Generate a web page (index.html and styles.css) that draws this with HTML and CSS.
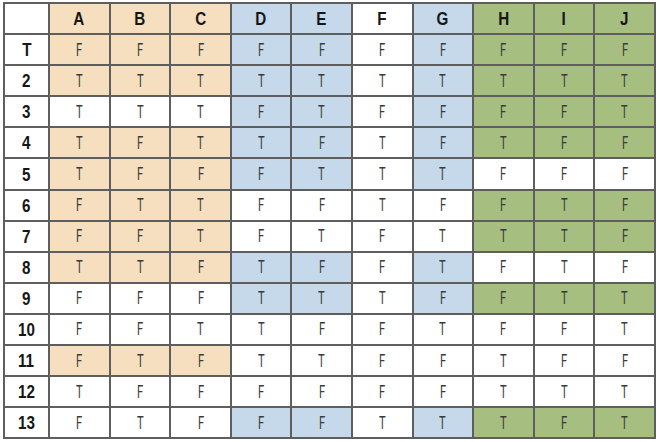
FILE: index.html
```html
<!DOCTYPE html>
<html>
<head>
<meta charset="utf-8">
<link rel="stylesheet" href="styles.css">
</head>
<body>
<table class="grid">
<colgroup><col class="c-head"><col><col><col><col><col><col><col><col><col><col></colgroup>
<tr>
<th class="corner"></th>
<th class="p"><span>A</span></th><th class="p"><span>B</span></th><th class="p"><span>C</span></th>
<th class="b"><span>D</span></th><th class="b"><span>E</span></th><th><span>F</span></th><th class="b"><span>G</span></th>
<th class="g"><span>H</span></th><th class="g"><span>I</span></th><th class="g"><span>J</span></th>
</tr>
<tr><th><span>T</span></th>
<td class="p"><span>F</span></td><td class="p"><span>F</span></td><td class="p"><span>F</span></td>
<td class="b"><span>F</span></td><td class="b"><span>F</span></td><td><span>F</span></td><td class="b"><span>F</span></td>
<td class="g"><span>F</span></td><td class="g"><span>F</span></td><td class="g"><span>F</span></td></tr>
<tr><th><span>2</span></th>
<td class="p"><span>T</span></td><td class="p"><span>T</span></td><td class="p"><span>T</span></td>
<td class="b"><span>T</span></td><td class="b"><span>T</span></td><td><span>T</span></td><td class="b"><span>T</span></td>
<td class="g"><span>T</span></td><td class="g"><span>T</span></td><td class="g"><span>T</span></td></tr>
<tr><th><span>3</span></th>
<td><span>T</span></td><td><span>T</span></td><td><span>T</span></td>
<td class="b"><span>F</span></td><td class="b"><span>T</span></td><td><span>F</span></td><td class="b"><span>F</span></td>
<td class="g"><span>F</span></td><td class="g"><span>F</span></td><td class="g"><span>T</span></td></tr>
<tr><th><span>4</span></th>
<td class="p"><span>T</span></td><td class="p"><span>F</span></td><td class="p"><span>T</span></td>
<td class="b"><span>T</span></td><td class="b"><span>F</span></td><td><span>T</span></td><td class="b"><span>F</span></td>
<td class="g"><span>T</span></td><td class="g"><span>F</span></td><td class="g"><span>F</span></td></tr>
<tr><th><span>5</span></th>
<td class="p"><span>T</span></td><td class="p"><span>F</span></td><td class="p"><span>F</span></td>
<td class="b"><span>F</span></td><td class="b"><span>T</span></td><td><span>T</span></td><td class="b"><span>T</span></td>
<td><span>F</span></td><td><span>F</span></td><td><span>F</span></td></tr>
<tr><th><span>6</span></th>
<td class="p"><span>F</span></td><td class="p"><span>T</span></td><td class="p"><span>T</span></td>
<td><span>F</span></td><td><span>F</span></td><td><span>T</span></td><td><span>F</span></td>
<td class="g"><span>F</span></td><td class="g"><span>T</span></td><td class="g"><span>F</span></td></tr>
<tr><th><span>7</span></th>
<td class="p"><span>F</span></td><td class="p"><span>F</span></td><td class="p"><span>T</span></td>
<td><span>F</span></td><td><span>T</span></td><td><span>F</span></td><td><span>T</span></td>
<td class="g"><span>T</span></td><td class="g"><span>T</span></td><td class="g"><span>F</span></td></tr>
<tr><th><span>8</span></th>
<td class="p"><span>T</span></td><td class="p"><span>T</span></td><td class="p"><span>F</span></td>
<td class="b"><span>T</span></td><td class="b"><span>F</span></td><td><span>F</span></td><td class="b"><span>T</span></td>
<td><span>F</span></td><td><span>T</span></td><td><span>F</span></td></tr>
<tr><th><span>9</span></th>
<td><span>F</span></td><td><span>F</span></td><td><span>F</span></td>
<td class="b"><span>T</span></td><td class="b"><span>T</span></td><td><span>T</span></td><td class="b"><span>F</span></td>
<td class="g"><span>F</span></td><td class="g"><span>T</span></td><td class="g"><span>T</span></td></tr>
<tr><th><span>10</span></th>
<td><span>F</span></td><td><span>F</span></td><td><span>T</span></td>
<td><span>T</span></td><td><span>F</span></td><td><span>F</span></td><td><span>T</span></td>
<td><span>F</span></td><td><span>F</span></td><td><span>T</span></td></tr>
<tr><th><span>11</span></th>
<td class="p"><span>F</span></td><td class="p"><span>T</span></td><td class="p"><span>F</span></td>
<td><span>T</span></td><td><span>T</span></td><td><span>F</span></td><td><span>F</span></td>
<td><span>T</span></td><td><span>F</span></td><td><span>F</span></td></tr>
<tr><th><span>12</span></th>
<td><span>T</span></td><td><span>F</span></td><td><span>F</span></td>
<td><span>F</span></td><td><span>F</span></td><td><span>F</span></td><td><span>F</span></td>
<td><span>T</span></td><td><span>T</span></td><td><span>T</span></td></tr>
<tr><th><span>13</span></th>
<td><span>F</span></td><td><span>T</span></td><td><span>F</span></td>
<td class="b"><span>F</span></td><td class="b"><span>F</span></td><td><span>T</span></td><td class="b"><span>T</span></td>
<td class="g"><span>T</span></td><td class="g"><span>F</span></td><td class="g"><span>T</span></td></tr>
</table>
</body>
</html>
```

FILE: styles.css
```css
html, body {
  margin: 0;
  padding: 0;
  background: #ffffff;
}
body {
  padding: 2px 0 0 3px;
}
.grid {
  border-collapse: collapse;
  table-layout: fixed;
  width: 651px;
  font-family: "Liberation Sans", Arial, sans-serif;
}
.grid col { width: 60.6px; }
.grid col.c-head { width: 45px; }
.grid th, .grid td {
  height: 29.1px;
  padding: 0;
  border: 2px solid #5e5e5e;
  text-align: center;
  vertical-align: middle;
  line-height: 1;
}
.grid th span {
  display: inline-block;
  font-weight: bold;
  font-size: 19px;
  color: #161616;
  transform: scaleX(0.8);
}
.grid td span {
  display: inline-block;
  font-family: "Roboto", "Liberation Sans", sans-serif;
  font-weight: 400;
  font-size: 18px;
  color: #3a3a3a;
  transform: scaleX(0.62);
}
.grid .p { background: #f6dfbe; }
.grid .b { background: #c5d9eb; }
.grid .g { background: #a6bf80; }
```
